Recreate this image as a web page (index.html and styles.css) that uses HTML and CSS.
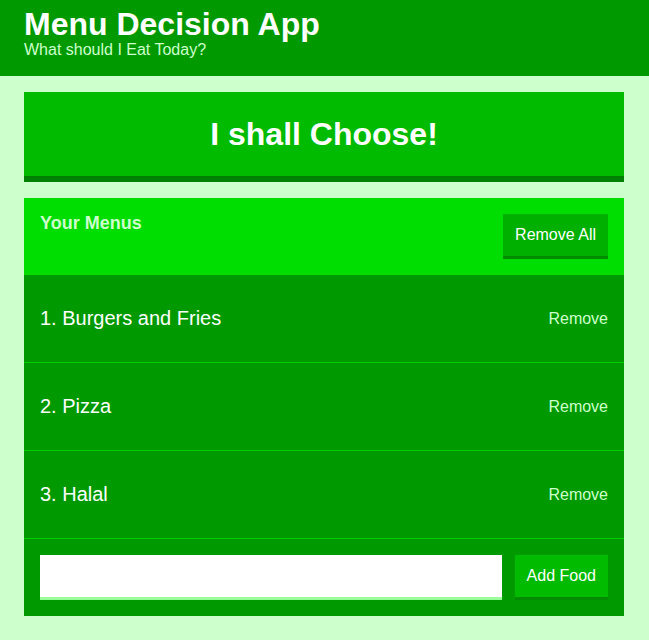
FILE: index.html
```html
<!DOCTYPE html>
<html lang="en">
<head>
<meta charset="utf-8">
<title>Menu Decision App</title>
<link rel="stylesheet" href="styles.css">
</head>
<body>
  <header class="header">
    <div class="container">
      <h1 class="header__title">Menu Decision App</h1>
      <h2 class="header__subtitle">What should I Eat Today?</h2>
    </div>
  </header>
  <main class="container">
    <button class="big-button">I shall Choose!</button>
    <section class="widget">
      <div class="widget-header">
        <h3 class="widget-header__title">Your Menus</h3>
        <button class="button">Remove All</button>
      </div>
      <div class="option">
        <p class="option__text">1. Burgers and Fries</p>
        <button class="button button--link">Remove</button>
      </div>
      <div class="option">
        <p class="option__text">2. Pizza</p>
        <button class="button button--link">Remove</button>
      </div>
      <div class="option">
        <p class="option__text">3. Halal</p>
        <button class="button button--link">Remove</button>
      </div>
      <form class="add-option">
        <input class="add-option__input" type="text" name="option">
        <button class="button button--add" type="button">Add Food</button>
      </form>
    </section>
  </main>
</body>
</html>
```
FILE: styles.css
```css
* { box-sizing: border-box; }
html, body { margin: 0; padding: 0; }
body {
  background: #ccffcc;
  font-family: "Liberation Sans", Arial, Helvetica, sans-serif;
  color: #ffffff;
}
.container {
  max-width: 648px;
  margin: 0 auto 0 0;
  padding: 0 24px;
}
.header {
  background: #009a00;
  padding: 6px 0 19px;
  margin-bottom: 16px;
}
.header__title {
  margin: 0;
  font-size: 32px;
  line-height: 37px;
  font-weight: bold;
  color: #ffffff;
}
.header__subtitle {
  margin: 0;
  font-size: 16px;
  line-height: 14px;
  font-weight: normal;
  color: #ccffcc;
}
.big-button {
  display: block;
  width: 100%;
  background: #00bb00;
  border: none;
  border-bottom: 6px solid #008000;
  color: #ffffff;
  font-family: inherit;
  font-size: 32px;
  line-height: 36px;
  font-weight: bold;
  padding: 24px;
  margin: 0 0 16px;
}
.widget {
  background: #009a00;
  margin-bottom: 25px;
}
.widget-header {
  background: #00dd00;
  display: flex;
  justify-content: space-between;
  align-items: flex-start;
  padding: 16px;
}
.widget-header__title {
  margin: 0;
  font-size: 18px;
  line-height: 18px;
  font-weight: bold;
  color: #ccffcc;
}
.button {
  background: #00b000;
  border: none;
  border-bottom: 3px solid #008a00;
  color: #ffffff;
  font-family: inherit;
  font-size: 16px;
  line-height: 18px;
  padding: 12px;
}
.button--link {
  background: none;
  border: none;
  color: #ccffcc;
  padding: 0;
}
.option {
  display: flex;
  justify-content: space-between;
  align-items: center;
  padding: 32px 16px;
  border-bottom: 1px solid #00cc00;
}
.option__text {
  margin: 0;
  font-size: 20px;
  line-height: 23px;
  color: #ffffff;
}
.add-option {
  display: flex;
  padding: 16px;
  margin: 0;
}
.add-option__input {
  flex: 1;
  border: none;
  border-bottom: 3px solid #99ff99;
  background: #ffffff;
  font-family: inherit;
  font-size: 16px;
  padding: 12px;
  margin-right: 13px;
  outline: none;
}
.button--add {
  background: #00bb00;
  border-bottom: 3px solid #008a00;
}
```
